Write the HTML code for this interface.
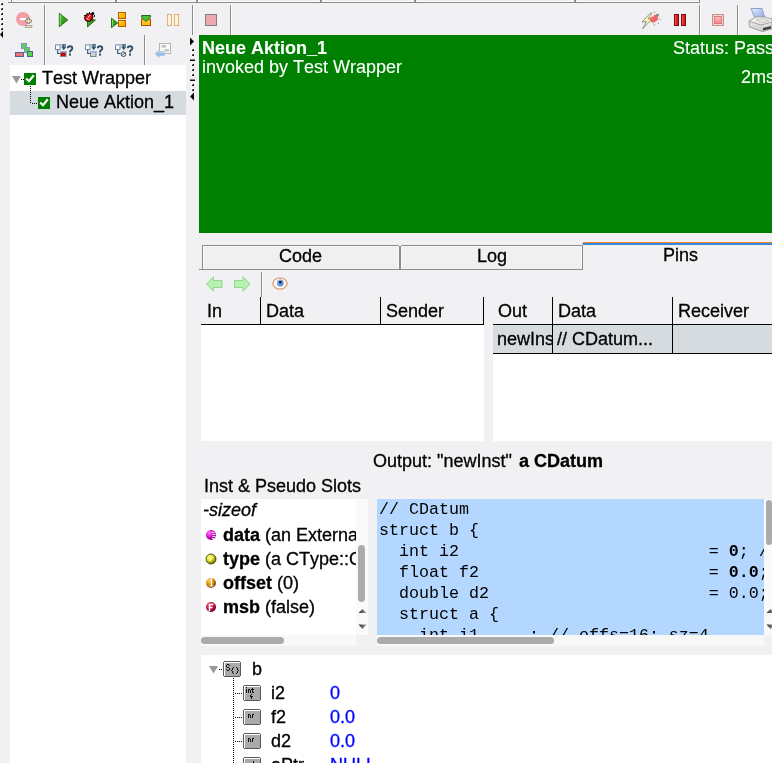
<!DOCTYPE html>
<html><head><meta charset="utf-8">
<style>
*{margin:0;padding:0;box-sizing:border-box}
html,body{width:772px;height:763px;overflow:hidden;background:#f1f1f3;font-family:"Liberation Sans",sans-serif;font-size:18px;color:#000;font-kerning:none}
.a{position:absolute}
.t{position:absolute;white-space:pre;line-height:20px;font-size:18px;will-change:transform;-webkit-text-stroke:0.3px currentColor}
.b{font-weight:bold}
.sep{position:absolute;width:1px;background:#8c8c8c;box-shadow:1px 0 0 #fff}
.g{position:absolute;background:#8c8c8c}
.k{position:absolute;background:#000}
svg{position:absolute;overflow:visible;will-change:transform}
.mono{position:absolute;white-space:pre;font-family:"Liberation Mono",monospace;font-size:16.67px;line-height:21px;will-change:transform}
.v{color:#0000ff}
</style></head><body>

<!-- ============ top area ============ -->
<div class="a" style="left:8px;top:0;width:692px;height:2px;background:#f0f0f0"></div>
<div class="a" style="left:9px;top:1px;width:690px;height:1px;background:#fafafa"></div>
<div class="g" style="left:8px;top:2px;width:692px;height:1px"></div>
<div class="g" style="left:11px;top:0;width:1px;height:2px"></div>
<div class="g" style="left:115px;top:0;width:2px;height:2px;box-shadow:-1px 0 0 #fafafa,1px 0 0 #fafafa"></div>
<div class="g" style="left:196px;top:0;width:2px;height:2px;box-shadow:-1px 0 0 #fafafa,1px 0 0 #fafafa"></div>
<div class="g" style="left:320px;top:0;width:2px;height:2px;box-shadow:-1px 0 0 #fafafa,1px 0 0 #fafafa"></div>
<div class="g" style="left:414px;top:0;width:2px;height:2px;box-shadow:-1px 0 0 #fafafa,1px 0 0 #fafafa"></div>
<div class="g" style="left:574px;top:0;width:2px;height:2px;box-shadow:-1px 0 0 #fafafa,1px 0 0 #fafafa"></div>
<div class="g" style="left:699px;top:0;width:1px;height:3px"></div>

<!-- left splitter dots -->
<svg style="left:0;top:0" width="6" height="40"><rect x="0" y="2" width="2" height="2" fill="#fff"/><rect x="1" y="3" width="2" height="2" fill="#222"/><rect x="1" y="3" width="1" height="1" fill="#888"/><rect x="0" y="7" width="2" height="2" fill="#fff"/><rect x="1" y="8" width="2" height="2" fill="#222"/><rect x="1" y="8" width="1" height="1" fill="#888"/><rect x="0" y="12" width="2" height="2" fill="#fff"/><rect x="1" y="13" width="2" height="2" fill="#222"/><rect x="1" y="13" width="1" height="1" fill="#888"/><rect x="0" y="17" width="2" height="2" fill="#fff"/><rect x="1" y="18" width="2" height="2" fill="#222"/><rect x="1" y="18" width="1" height="1" fill="#888"/><rect x="0" y="22" width="2" height="2" fill="#fff"/><rect x="1" y="23" width="2" height="2" fill="#222"/><rect x="1" y="23" width="1" height="1" fill="#888"/><rect x="0" y="27" width="2" height="2" fill="#fff"/><rect x="1" y="28" width="2" height="2" fill="#222"/><rect x="1" y="28" width="1" height="1" fill="#888"/><path d="M0 34.5 L3 31 L3 38 Z" fill="#000"/></svg>

<!-- toolbar separators (with highlight) -->
<div class="sep" style="left:44px;top:5px;height:60px"></div>
<div class="sep" style="left:144px;top:35px;height:30px"></div>
<div class="sep" style="left:192px;top:5px;height:30px"></div>
<div class="sep" style="left:230px;top:5px;height:30px"></div>
<div class="sep" style="left:699px;top:5px;height:30px"></div>
<div class="sep" style="left:737px;top:5px;height:30px"></div>

<!-- toolbar icons row 1 -->
<!-- red minus circle -->
<svg style="left:0;top:0" width="40" height="40">
 <circle cx="23" cy="19" r="7" fill="#f2a0a4"/>
 <rect x="20" y="18" width="6" height="2.2" fill="#fff"/>
 <path d="M28.5 17.8 v6 M25.3 21 h6.4" stroke="#6a7080" stroke-width="2.8"/>
 <path d="M28.5 18.5 v4.6 M26 21 h5" stroke="#fbe6a0" stroke-width="1.3"/>
 <rect x="25.3" y="25.6" width="6.6" height="1.9" fill="#fbe6a0" stroke="#7a8090" stroke-width="0.6"/>
</svg>
<!-- play -->
<svg style="left:0;top:0" width="130" height="34">
 <defs>
  <linearGradient id="gpl" x1="0" y1="0" x2="1" y2="1"><stop offset="0" stop-color="#70e050"/><stop offset="0.45" stop-color="#3aa028"/><stop offset="1" stop-color="#2a7018"/></linearGradient>
 </defs>
 <path d="M59.3 13.2 L67.8 20 L59.3 26.8 Z" fill="url(#gpl)" stroke="#2a6a18" stroke-width="0.9" stroke-linejoin="round"/>
 <path d="M60.3 15 V25" stroke="#80f060" stroke-width="0.9"/>
 <!-- bug -->
 <path d="M87.5 19 L95.5 20 L87.5 27 Z" fill="url(#gpl)" stroke="#2a6a18" stroke-width="0.9" stroke-linejoin="round"/>
 <path d="M90 22 l1 -2 M92 21.5 l1 -2" stroke="#1a4a10" stroke-width="0.8"/>
 <ellipse cx="88.8" cy="17.5" rx="4.3" ry="3.6" transform="rotate(-35 88.8 17.5)" fill="#e01010" stroke="#000" stroke-width="1"/>
 <circle cx="87.2" cy="18.8" r="0.7" fill="#fff"/><circle cx="88.5" cy="17" r="0.7" fill="#fff"/><circle cx="89.8" cy="15.8" r="0.7" fill="#fff"/><circle cx="88.8" cy="19.5" r="0.6" fill="#fff"/>
 <circle cx="92.8" cy="13.5" r="1.5" fill="#000"/>
 <path d="M84 15.5 h2 M86.5 13.5 l1.5 0.5 M94.5 15 v2 M89 12 l1 1" stroke="#000" stroke-width="0.9"/>
</svg>
<!-- play + yellow boxes -->
<svg style="left:0;top:0" width="130" height="34">
 <defs><linearGradient id="gyb" x1="0" y1="0" x2="1" y2="1"><stop offset="0" stop-color="#fff080"/><stop offset="0.4" stop-color="#ffc000"/><stop offset="1" stop-color="#f0a000"/></linearGradient></defs>
 <path d="M111.5 18.3 L117.6 23 L111.5 27.6 Z" fill="url(#gpl)" stroke="#1a5a10" stroke-width="0.9" stroke-linejoin="round"/>
 <path d="M112.5 20 V26" stroke="#70f040" stroke-width="0.9"/>
 <rect x="118.5" y="12.5" width="7" height="6" fill="url(#gyb)" stroke="#b85a00"/>
 <rect x="118.5" y="20.5" width="7" height="6" fill="url(#gyb)" stroke="#b85a00"/>
</svg>
<!-- envelope -->
<svg style="left:141px;top:15px" width="12" height="12">
 <rect x="0.5" y="4" width="9" height="6.5" fill="#ffc020" stroke="#a05000"/>
 <path d="M0.5 0.5 h9 v1.5 l-4.5 4.5 l-4.5 -4.5 Z" fill="#48c038" stroke="#207018" stroke-width="1"/>
</svg>
<!-- pause light -->
<svg style="left:167px;top:14px" width="14" height="14">
 <rect x="0.5" y="0.5" width="4" height="11" fill="#fff6d0" stroke="#e0b080"/>
 <rect x="7.5" y="0.5" width="4" height="11" fill="#fff6d0" stroke="#e0b080"/>
</svg>
<!-- pink stop -->
<svg style="left:205px;top:14px" width="13" height="13">
 <rect x="0.5" y="0.5" width="11" height="11" fill="#f0a8b0" stroke="#808080"/>
</svg>

<!-- right toolbar -->
<svg style="left:0;top:0" width="700" height="34">
 <defs><linearGradient id="rbar" x1="0" y1="0" x2="1" y2="0"><stop offset="0" stop-color="#f8a080"/><stop offset="0.35" stop-color="#e83020"/><stop offset="1" stop-color="#c01010"/></linearGradient></defs>
 <path d="M650.5 13 L642 22 L646.5 21.5 L642.5 29 L652.5 18.5 L648 19 L652 13 Z" fill="#fafab0" stroke="#8a8a80" stroke-width="0.9" stroke-linejoin="round"/>
 <ellipse cx="654" cy="18.8" rx="4.3" ry="3.4" transform="rotate(-35 654 18.8)" fill="#f06868"/>
 <path d="M651 17 Q652.5 15.5 654 15.8" stroke="#fff" stroke-width="1" fill="none"/>
 <circle cx="657.5" cy="15" r="1.5" fill="#888"/>
 <path d="M659 19 l1.5 1 M657.5 22.5 l1.5 1.5 M654 23.5 l0.5 1.8 M655 13 l-1 -1.2" stroke="#888" stroke-width="0.9"/>
 <rect x="674.5" y="14.5" width="4" height="11" fill="url(#rbar)" stroke="#800818"/>
 <rect x="681.5" y="14.5" width="4" height="11" fill="url(#rbar)" stroke="#800818"/>
</svg>

<svg style="left:712px;top:14px" width="13" height="13">
 <defs><linearGradient id="pk" x1="0" y1="0" x2="0" y2="1"><stop offset="0" stop-color="#ffc0c0"/><stop offset="1" stop-color="#ff8080"/></linearGradient></defs>
 <rect x="0.5" y="0.5" width="11" height="11" fill="#e2ded6" stroke="#d08888"/>
 <rect x="2.5" y="2.5" width="7" height="7" fill="url(#pk)" stroke="#d08080"/>
</svg>
<svg style="left:0;top:0" width="772" height="34">
 <defs>
  <linearGradient id="pap" x1="0" y1="0" x2="1" y2="1"><stop offset="0" stop-color="#e4ecfa"/><stop offset="1" stop-color="#8aa8e0"/></linearGradient>
  <linearGradient id="pbody" x1="0" y1="0" x2="0" y2="1"><stop offset="0" stop-color="#f8f8f8"/><stop offset="1" stop-color="#c8c8c8"/></linearGradient>
 </defs>
 <path d="M751 8.5 L762 8.5 L764.5 17 L755 18.5 Z" fill="url(#pap)" stroke="#7f9ad0" stroke-width="0.9"/>
 <path d="M749 21 L756 17 L765 17 L772 19 L772 29 L762 31.5 L749.5 27 Z" fill="url(#pbody)" stroke="#9a9a90" stroke-width="0.9"/>
 <path d="M749.5 21.5 L761 25 L772 22" stroke="#a0a098" stroke-width="0.9" fill="none"/>
 <path d="M756 19.5 L763 18.5 L769 20.5 L762 22.5 Z" fill="#e8e8e8" stroke="#b0b0a8" stroke-width="0.6"/>
 <path d="M763 28 L771 26 L771 28.5 L763 30.5 Z" fill="#404040"/>
</svg>

<!-- toolbar icons row 2 -->
<svg style="left:15px;top:43px" width="19" height="15">
 <rect x="6.5" y="0.5" width="5" height="5" fill="#50d850" stroke="#8890c0"/>
 <rect x="9.5" y="4.5" width="5" height="5" fill="#50d850" stroke="#8890c0"/>
 <rect x="12.5" y="8.5" width="5" height="5" fill="#50d850" stroke="#506090"/>
 <rect x="0.5" y="9.5" width="8" height="4" fill="#f07080" stroke="#506090"/>
</svg>
<!-- ? icons -->
<svg style="left:0;top:0" width="140" height="60"><g transform="translate(0,0)"><rect x="55.5" y="44.5" width="4.5" height="5" fill="#fff" stroke="#6a8ca0"/><rect x="55" y="44" width="5.5" height="1.6" fill="#98b0dc"/><path d="M57.7 50 V53.5 H60.5" stroke="#2e5068" stroke-width="1.1" fill="none"/><path d="M61.5 44.8 H66 M63.75 45 V49.5 M61.8 46.3 L63.75 49.2 L65.7 46.3" stroke="#2e5068" stroke-width="1.2" fill="none"/><rect x="60.5" y="51.5" width="5.5" height="5" fill="#d00000" stroke="#6a8ca0"/><rect x="60" y="51" width="6.5" height="1.6" fill="#98b0dc"/><path d="M67.8 48.3 Q67.8 46.2 70 46.2 Q72.3 46.2 72.3 48.3 Q72.3 49.6 70.8 50.4 Q70 50.9 70 52.5" stroke="#2e5068" stroke-width="1.9" fill="none"/><rect x="69" y="53.6" width="2" height="2" fill="#2e5068"/></g><g transform="translate(30,0)"><rect x="55.5" y="44.5" width="4.5" height="5" fill="#fff" stroke="#6a8ca0"/><rect x="55" y="44" width="5.5" height="1.6" fill="#98b0dc"/><path d="M57.7 50 V53.5 H60.5" stroke="#2e5068" stroke-width="1.1" fill="none"/><path d="M61.5 44.8 H66 M63.75 45 V49.5 M61.8 46.3 L63.75 49.2 L65.7 46.3" stroke="#2e5068" stroke-width="1.2" fill="none"/><rect x="60.5" y="51.5" width="5.5" height="5" fill="#d0d0d0" stroke="#6a8ca0"/><rect x="60" y="51" width="6.5" height="1.6" fill="#98b0dc"/><path d="M67.8 48.3 Q67.8 46.2 70 46.2 Q72.3 46.2 72.3 48.3 Q72.3 49.6 70.8 50.4 Q70 50.9 70 52.5" stroke="#2e5068" stroke-width="1.9" fill="none"/><rect x="69" y="53.6" width="2" height="2" fill="#2e5068"/></g><g transform="translate(60,0)"><rect x="55.5" y="44.5" width="4.5" height="5" fill="#fff" stroke="#6a8ca0"/><rect x="55" y="44" width="5.5" height="1.6" fill="#98b0dc"/><path d="M57.7 50 V53.5 H60.5" stroke="#2e5068" stroke-width="1.1" fill="none"/><path d="M61.5 44.8 H66 M63.75 45 V49.5 M61.8 46.3 L63.75 49.2 L65.7 46.3" stroke="#2e5068" stroke-width="1.2" fill="none"/><circle cx="63.5" cy="54.2" r="2.3" fill="none" stroke="#2e5068" stroke-width="1"/><path d="M62.2 55.5 L64.8 52.9" stroke="#2e5068" stroke-width="1"/><path d="M67.8 48.3 Q67.8 46.2 70 46.2 Q72.3 46.2 72.3 48.3 Q72.3 49.6 70.8 50.4 Q70 50.9 70 52.5" stroke="#2e5068" stroke-width="1.9" fill="none"/><rect x="69" y="53.6" width="2" height="2" fill="#2e5068"/></g></svg>
<!-- arrow window -->
<svg style="left:0;top:0" width="180" height="60">
 <rect x="159.5" y="43.5" width="11" height="10" fill="#fafafa" stroke="#b4b4a4"/>
 <rect x="161.5" y="45" width="4.5" height="2.6" fill="#c4c4c4"/>
 <rect x="164.5" y="49" width="4.5" height="2.6" fill="#c4c4c4"/>
 <defs><linearGradient id="abl" x1="0" y1="0" x2="0" y2="1"><stop offset="0" stop-color="#c8dcf8"/><stop offset="1" stop-color="#80a8e0"/></linearGradient></defs>
 <path d="M154.8 53.5 L159.3 49.3 L159.3 51.3 L164.8 51.3 L164.8 55.7 L159.3 55.7 L159.3 57.7 Z" fill="url(#abl)"/>
</svg>

<!-- ============ left tree panel ============ -->
<div class="a" style="left:10px;top:65px;width:176px;height:698px;background:#fff"></div>
<div class="a" style="left:10px;top:91px;width:176px;height:24px;background:#d6dbe0"></div>
<svg style="left:10px;top:70px" width="50" height="45">
 <path d="M2 6 L11 6 L6.5 13.5 Z" fill="#999"/>
 <g fill="#000"><rect x="11" y="9" width="1" height="1"/><rect x="13" y="9" width="1" height="1"/>
 <rect x="20" y="16" width="1" height="1"/><rect x="20" y="18" width="1" height="1"/><rect x="20" y="20" width="1" height="1"/><rect x="20" y="22" width="1" height="1"/><rect x="20" y="24" width="1" height="1"/><rect x="20" y="26" width="1" height="1"/><rect x="20" y="28" width="1" height="1"/><rect x="20" y="30" width="1" height="1"/><rect x="20" y="32" width="1" height="1"/>
 <rect x="22" y="33" width="1" height="1"/><rect x="24" y="33" width="1" height="1"/><rect x="26" y="33" width="1" height="1"/></g>
 <rect x="14" y="3" width="12" height="12" fill="#008000"/>
 <path d="M16.2 8.5 L19 11.2 L23.8 5.2" stroke="#fff" stroke-width="2.2" fill="none"/>
 <rect x="28" y="27" width="12" height="12" fill="#008000"/>
 <path d="M30.2 32.5 L33 35.2 L37.8 29.2" stroke="#fff" stroke-width="2.2" fill="none"/>
</svg>
<div class="t" style="left:42px;top:68px">Test Wrapper</div>
<div class="t" style="left:56px;top:92px">Neue Aktion_1</div>

<!-- middle splitter -->
<svg style="left:189px;top:36px" width="8" height="66"><path d="M1 1.5 L5 5.5 L1 9.5 Z" fill="#000"/><rect x="2" y="12" width="2" height="2" fill="#fff"/><rect x="3" y="13" width="2" height="2" fill="#222"/><rect x="3" y="13" width="1" height="1" fill="#888"/><rect x="2" y="17" width="2" height="2" fill="#fff"/><rect x="3" y="18" width="2" height="2" fill="#222"/><rect x="3" y="18" width="1" height="1" fill="#888"/><rect x="2" y="27" width="2" height="2" fill="#fff"/><rect x="3" y="28" width="2" height="2" fill="#222"/><rect x="3" y="28" width="1" height="1" fill="#888"/><rect x="2" y="32" width="2" height="2" fill="#fff"/><rect x="3" y="33" width="2" height="2" fill="#222"/><rect x="3" y="33" width="1" height="1" fill="#888"/><rect x="2" y="37" width="2" height="2" fill="#fff"/><rect x="3" y="38" width="2" height="2" fill="#222"/><rect x="3" y="38" width="1" height="1" fill="#888"/><rect x="2" y="47" width="2" height="2" fill="#fff"/><rect x="3" y="48" width="2" height="2" fill="#222"/><rect x="3" y="48" width="1" height="1" fill="#888"/><rect x="2" y="52" width="2" height="2" fill="#fff"/><rect x="3" y="53" width="2" height="2" fill="#222"/><rect x="3" y="53" width="1" height="1" fill="#888"/><rect x="1" y="23.5" width="5" height="1.5" fill="#111"/><rect x="1" y="43.5" width="5" height="1.5" fill="#111"/><path d="M5 56.5 L1 60.5 L5 64.5 Z" fill="#000"/></svg>

<!-- ============ green panel ============ -->
<div class="a" style="left:199px;top:35px;width:573px;height:198px;background:#008000"></div>
<div class="t b" style="left:202px;top:38px;color:#fff;-webkit-text-stroke:0.1px #fff">Neue Aktion_1</div>
<div class="t" style="left:202px;top:57px;color:#fff;-webkit-text-stroke:0.1px #fff">invoked by Test Wrapper</div>
<div class="t" style="left:673px;top:38px;color:#fff;-webkit-text-stroke:0.1px #fff">Status: Pass</div>
<div class="t" style="left:741px;top:67px;color:#fff;-webkit-text-stroke:0.1px #fff">2ms</div>

<!-- ============ tabs ============ -->
<div class="g" style="left:199px;top:269px;width:573px;height:1px"></div>
<div class="a" style="left:202px;top:245px;width:198px;height:24px;border:1px solid #8c8c8c;border-bottom:none;border-radius:1px 1px 0 0;background:#f0f0f0;box-shadow:inset 1px 1px 0 #f9f9f9,inset -1px 0 0 #f9f9f9"></div>
<div class="a" style="left:400px;top:245px;width:183px;height:24px;border:1px solid #8c8c8c;border-bottom:none;border-radius:1px 1px 0 0;background:#f0f0f0;box-shadow:inset 1px 1px 0 #f9f9f9,inset -1px 0 0 #f9f9f9"></div>
<div class="a" style="left:399px;top:245px;width:2px;height:1px;background:#fafafa"></div>
<div class="a" style="left:583px;top:242px;width:189px;height:28px;background:#f1f1f3"></div>
<div class="a" style="left:583px;top:242px;width:189px;height:1px;background:#f08a24"></div>
<div class="a" style="left:582px;top:243px;width:1px;height:1px;background:#f08a24"></div>
<div class="a" style="left:583px;top:243px;width:189px;height:2px;background:#3a86dc"></div>
<div class="t" style="left:279px;top:246px">Code</div>
<div class="t" style="left:477px;top:246px">Log</div>
<div class="t" style="left:663px;top:245px">Pins</div>

<!-- ============ pins toolbar ============ -->
<div class="sep" style="left:261px;top:272px;height:25px"></div>
<svg style="left:206px;top:276px" width="17" height="16">
 <path d="M0.5 8 L7.5 0.8 L7.5 4.5 L16 4.5 L16 11.5 L7.5 11.5 L7.5 15.2 Z" fill="#b8f0b0" stroke="#8ad888" stroke-width="1"/>
</svg>
<svg style="left:234px;top:276px" width="17" height="16">
 <path d="M16 8 L9 0.8 L9 4.5 L0.5 4.5 L0.5 11.5 L9 11.5 L9 15.2 Z" fill="#b8f0b0" stroke="#8ad888" stroke-width="1"/>
</svg>
<svg style="left:272px;top:277px" width="17" height="13">
 <defs><radialGradient id="iris" cx="0.4" cy="0.4" r="0.6"><stop offset="0" stop-color="#a8c8f8"/><stop offset="1" stop-color="#4a78d0"/></radialGradient></defs>
 <path d="M0.8 6.5 C2.5 -0.8 13.5 -0.8 15.2 6.5 C13.5 13.8 2.5 13.8 0.8 6.5 Z" fill="#fff" stroke="#e0a880" stroke-width="1.4"/>
 <circle cx="8.2" cy="6" r="3.4" fill="url(#iris)"/>
 <circle cx="8.2" cy="5.3" r="1.2" fill="#000"/>
</svg>

<!-- ============ In table ============ -->
<div class="a" style="left:201px;top:325px;width:283px;height:116px;background:#fff"></div>
<div class="k" style="left:201px;top:324px;width:283px;height:1px"></div>
<div class="k" style="left:260px;top:297px;width:1px;height:28px"></div>
<div class="k" style="left:380px;top:297px;width:1px;height:28px"></div>
<div class="k" style="left:483px;top:297px;width:1px;height:28px"></div>
<div class="t" style="left:207px;top:301px">In</div>
<div class="t" style="left:266px;top:301px">Data</div>
<div class="t" style="left:386px;top:301px">Sender</div>

<!-- ============ Out table ============ -->
<div class="a" style="left:493px;top:325px;width:279px;height:116px;background:#fff"></div>
<div class="a" style="left:493px;top:325px;width:279px;height:28px;background:#d6dbe0"></div>
<div class="k" style="left:493px;top:324px;width:279px;height:1px"></div>
<div class="k" style="left:493px;top:353px;width:279px;height:1px"></div>
<div class="k" style="left:552px;top:297px;width:1px;height:57px"></div>
<div class="k" style="left:672px;top:297px;width:1px;height:57px"></div>
<div class="t" style="left:498px;top:301px">Out</div>
<div class="t" style="left:558px;top:301px">Data</div>
<div class="t" style="left:678px;top:301px">Receiver</div>
<div class="a" style="left:493px;top:325px;width:59px;height:28px;overflow:hidden"><div class="t" style="left:4px;top:4px">newInst</div></div>
<div class="t" style="left:557px;top:329px">// CDatum...</div>

<!-- ============ output ============ -->
<div class="t" style="left:373px;top:451px">Output: "newInst"</div>
<div class="t b" style="left:519px;top:451px">a CDatum</div>
<div class="t" style="left:204px;top:476px">Inst &amp; Pseudo Slots</div>

<!-- slot list -->
<div class="a" style="left:201px;top:499px;width:155px;height:136px;background:#fff"></div>
<div class="a" style="left:356px;top:499px;width:12px;height:136px;background:#fafafa"></div>
<div class="a" style="left:201px;top:635px;width:155px;height:11px;background:#f8f8f8"></div>
<div class="a" style="left:201px;top:499px;width:155px;height:136px;overflow:hidden">
 <div class="t" style="left:2px;top:1px;font-style:italic">-sizeof</div>
 <div class="t" style="left:22px;top:26px"><b>data</b> (an ExternalBytes)</div>
 <div class="t" style="left:22px;top:50px"><b>type</b> (a CType::CStruct)</div>
 <div class="t" style="left:22px;top:74px"><b>offset</b> (0)</div>
 <div class="t" style="left:22px;top:98px"><b>msb</b> (false)</div>
</div>
<svg style="left:206px;top:530px" width="11" height="84">
 <defs>
  <radialGradient id="gm" cx="0.35" cy="0.3" r="0.75"><stop offset="0" stop-color="#ff80ff"/><stop offset="0.5" stop-color="#e010d0"/><stop offset="1" stop-color="#700060"/></radialGradient>
  <radialGradient id="gy" cx="0.35" cy="0.3" r="0.75"><stop offset="0" stop-color="#ffffa0"/><stop offset="0.5" stop-color="#e0e020"/><stop offset="1" stop-color="#606000"/></radialGradient>
  <radialGradient id="go" cx="0.35" cy="0.3" r="0.75"><stop offset="0" stop-color="#ffd060"/><stop offset="0.5" stop-color="#d89010"/><stop offset="1" stop-color="#704000"/></radialGradient>
  <radialGradient id="gr" cx="0.35" cy="0.3" r="0.75"><stop offset="0" stop-color="#ff6080"/><stop offset="0.5" stop-color="#d01040"/><stop offset="1" stop-color="#600018"/></radialGradient>
 </defs>
 <circle cx="5" cy="5" r="5" fill="url(#gm)"/>
 <path d="M6 2.5 h2.5 M6.5 4.5 h3 M6.5 6.5 h3 M6 8.5 h2.5" stroke="#fff" stroke-width="0.9"/>
 <circle cx="5" cy="29" r="5" fill="url(#gy)" stroke="#303000" stroke-width="0.8"/>
 <path d="M3 31 l4 -4" stroke="#fff" stroke-width="0.9"/>
 <circle cx="5" cy="53" r="5" fill="url(#go)"/>
 <path d="M4 50 l1.5 -1 v7 M3.5 56 h4" stroke="#fff" stroke-width="1.2" fill="none"/>
 <circle cx="5" cy="77" r="5" fill="url(#gr)"/>
 <path d="M3.5 81 v-6.5 h4 M3.5 77.5 h3" stroke="#fff" stroke-width="1.5" fill="none"/>
</svg>
<!-- slot vscroll -->
<div class="a" style="left:358px;top:545px;width:7px;height:57px;background:#ababab;border-radius:4px"></div>
<svg style="left:358px;top:608px" width="10" height="24">
 <defs><linearGradient id="ar" x1="0" y1="0" x2="1" y2="0"><stop offset="0" stop-color="#222"/><stop offset="1" stop-color="#aaa"/></linearGradient></defs>
 <path d="M0.5 5 L4.5 1 L8.5 5 Z" fill="url(#ar)"/>
 <path d="M0.5 16.5 L4.5 21 L8.5 16.5 Z" fill="url(#ar)"/>
</svg>
<!-- slot hscroll -->
<div class="a" style="left:201px;top:637px;width:83px;height:7px;background:#ababab;border-radius:4px"></div>

<!-- ============ code ============ -->
<div class="a" style="left:377px;top:499px;width:387px;height:136px;background:#b3d7ff;overflow:hidden">
 <div class="mono" style="left:2px;top:0px">// CDatum
struct b {
  int i2                         = <b>0</b>; // offs=0; sz=4
  float f2                       = <b>0.0</b>; // offs=4; sz=4
  double d2                      = 0.0; // offs=8; sz=8
  struct a {
    int i1     : // offs=16; sz=4
    float f1   : // offs=20; sz=4</div>
</div>
<div class="a" style="left:377px;top:635px;width:387px;height:11px;background:#f8f8f8"></div>
<div class="a" style="left:377px;top:637px;width:177px;height:7px;background:#ababab;border-radius:4px"></div>
<div class="a" style="left:764px;top:499px;width:8px;height:136px;background:#fafafa"></div>
<div class="a" style="left:766px;top:500px;width:6px;height:45px;background:#ababab;border-radius:3px"></div>
<svg style="left:766px;top:608px" width="8" height="24">
 <path d="M0.5 5 L4.5 1 L8.5 5 Z" fill="url(#ar)"/>
 <path d="M0.5 16.5 L4.5 21 L8.5 16.5 Z" fill="url(#ar)"/>
</svg>

<!-- ============ bottom tree ============ -->
<div class="a" style="left:201px;top:655px;width:571px;height:108px;background:#fff"></div>
<svg style="left:0;top:0" width="300" height="763"><path d="M209 666 L218 666 L213.5 673.5 Z" fill="#999"/><rect x="219" y="669" width="1" height="1" fill="#000"/><rect x="221" y="669" width="1" height="1" fill="#000"/><rect x="233" y="678" width="1" height="1" fill="#000"/><rect x="233" y="680" width="1" height="1" fill="#000"/><rect x="233" y="682" width="1" height="1" fill="#000"/><rect x="233" y="684" width="1" height="1" fill="#000"/><rect x="233" y="686" width="1" height="1" fill="#000"/><rect x="233" y="688" width="1" height="1" fill="#000"/><rect x="233" y="690" width="1" height="1" fill="#000"/><rect x="233" y="692" width="1" height="1" fill="#000"/><rect x="233" y="694" width="1" height="1" fill="#000"/><rect x="233" y="696" width="1" height="1" fill="#000"/><rect x="233" y="698" width="1" height="1" fill="#000"/><rect x="233" y="700" width="1" height="1" fill="#000"/><rect x="233" y="702" width="1" height="1" fill="#000"/><rect x="233" y="704" width="1" height="1" fill="#000"/><rect x="233" y="706" width="1" height="1" fill="#000"/><rect x="233" y="708" width="1" height="1" fill="#000"/><rect x="233" y="710" width="1" height="1" fill="#000"/><rect x="233" y="712" width="1" height="1" fill="#000"/><rect x="233" y="714" width="1" height="1" fill="#000"/><rect x="233" y="716" width="1" height="1" fill="#000"/><rect x="233" y="718" width="1" height="1" fill="#000"/><rect x="233" y="720" width="1" height="1" fill="#000"/><rect x="233" y="722" width="1" height="1" fill="#000"/><rect x="233" y="724" width="1" height="1" fill="#000"/><rect x="233" y="726" width="1" height="1" fill="#000"/><rect x="233" y="728" width="1" height="1" fill="#000"/><rect x="233" y="730" width="1" height="1" fill="#000"/><rect x="233" y="732" width="1" height="1" fill="#000"/><rect x="233" y="734" width="1" height="1" fill="#000"/><rect x="233" y="736" width="1" height="1" fill="#000"/><rect x="233" y="738" width="1" height="1" fill="#000"/><rect x="233" y="740" width="1" height="1" fill="#000"/><rect x="233" y="742" width="1" height="1" fill="#000"/><rect x="233" y="744" width="1" height="1" fill="#000"/><rect x="233" y="746" width="1" height="1" fill="#000"/><rect x="233" y="748" width="1" height="1" fill="#000"/><rect x="233" y="750" width="1" height="1" fill="#000"/><rect x="233" y="752" width="1" height="1" fill="#000"/><rect x="233" y="754" width="1" height="1" fill="#000"/><rect x="233" y="756" width="1" height="1" fill="#000"/><rect x="233" y="758" width="1" height="1" fill="#000"/><rect x="233" y="760" width="1" height="1" fill="#000"/><rect x="233" y="762" width="1" height="1" fill="#000"/><rect x="235" y="693" width="1" height="1" fill="#000"/><rect x="237" y="693" width="1" height="1" fill="#000"/><rect x="239" y="693" width="1" height="1" fill="#000"/><rect x="241" y="693" width="1" height="1" fill="#000"/><rect x="235" y="717" width="1" height="1" fill="#000"/><rect x="237" y="717" width="1" height="1" fill="#000"/><rect x="239" y="717" width="1" height="1" fill="#000"/><rect x="241" y="717" width="1" height="1" fill="#000"/><rect x="235" y="741" width="1" height="1" fill="#000"/><rect x="237" y="741" width="1" height="1" fill="#000"/><rect x="239" y="741" width="1" height="1" fill="#000"/><rect x="241" y="741" width="1" height="1" fill="#000"/><rect x="224" y="661" width="16" height="1" fill="#5a5a5a"/><rect x="224" y="676" width="16" height="1" fill="#5a5a5a"/><rect x="223" y="662" width="1" height="14" fill="#5a5a5a"/><rect x="240" y="662" width="1" height="14" fill="#5a5a5a"/><rect x="224" y="662" width="16" height="14" fill="#fff"/><rect x="225" y="663" width="15" height="13" fill="#aaa"/><rect x="227" y="664" width="1" height="1" fill="#111"/><rect x="228" y="664" width="1" height="1" fill="#111"/><rect x="226" y="665" width="1" height="1" fill="#111"/><rect x="229" y="665" width="1" height="1" fill="#111"/><rect x="226" y="666" width="1" height="1" fill="#111"/><rect x="227" y="667" width="1" height="1" fill="#111"/><rect x="228" y="667" width="1" height="1" fill="#111"/><rect x="229" y="668" width="1" height="1" fill="#111"/><rect x="226" y="669" width="1" height="1" fill="#111"/><rect x="229" y="669" width="1" height="1" fill="#111"/><rect x="227" y="670" width="1" height="1" fill="#111"/><rect x="228" y="670" width="1" height="1" fill="#111"/><rect x="233" y="667" width="1" height="1" fill="#111"/><rect x="232" y="668" width="1" height="1" fill="#111"/><rect x="232" y="669" width="1" height="1" fill="#111"/><rect x="231" y="670" width="1" height="1" fill="#111"/><rect x="232" y="671" width="1" height="1" fill="#111"/><rect x="232" y="672" width="1" height="1" fill="#111"/><rect x="233" y="673" width="1" height="1" fill="#111"/><rect x="236" y="667" width="1" height="1" fill="#111"/><rect x="237" y="668" width="1" height="1" fill="#111"/><rect x="237" y="669" width="1" height="1" fill="#111"/><rect x="238" y="670" width="1" height="1" fill="#111"/><rect x="237" y="671" width="1" height="1" fill="#111"/><rect x="237" y="672" width="1" height="1" fill="#111"/><rect x="236" y="673" width="1" height="1" fill="#111"/><rect x="244" y="685" width="16" height="1" fill="#5a5a5a"/><rect x="244" y="700" width="16" height="1" fill="#5a5a5a"/><rect x="243" y="686" width="1" height="14" fill="#5a5a5a"/><rect x="260" y="686" width="1" height="14" fill="#5a5a5a"/><rect x="244" y="686" width="16" height="14" fill="#fff"/><rect x="245" y="687" width="15" height="13" fill="#aaa"/><rect x="246" y="687" width="1" height="1" fill="#111"/><rect x="246" y="689" width="1" height="1" fill="#111"/><rect x="246" y="690" width="1" height="1" fill="#111"/><rect x="246" y="691" width="1" height="1" fill="#111"/><rect x="246" y="692" width="1" height="1" fill="#111"/><rect x="248" y="689" width="1" height="1" fill="#111"/><rect x="248" y="690" width="1" height="1" fill="#111"/><rect x="248" y="691" width="1" height="1" fill="#111"/><rect x="248" y="692" width="1" height="1" fill="#111"/><rect x="249" y="689" width="1" height="1" fill="#111"/><rect x="250" y="690" width="1" height="1" fill="#111"/><rect x="250" y="691" width="1" height="1" fill="#111"/><rect x="250" y="692" width="1" height="1" fill="#111"/><rect x="252" y="688" width="1" height="1" fill="#111"/><rect x="252" y="689" width="1" height="1" fill="#111"/><rect x="252" y="690" width="1" height="1" fill="#111"/><rect x="252" y="691" width="1" height="1" fill="#111"/><rect x="252" y="692" width="1" height="1" fill="#111"/><rect x="251" y="689" width="1" height="1" fill="#111"/><rect x="253" y="689" width="1" height="1" fill="#111"/><rect x="253" y="692" width="1" height="1" fill="#111"/><rect x="251" y="694" width="1" height="1" fill="#111"/><rect x="250" y="695" width="1" height="1" fill="#111"/><rect x="250" y="696" width="1" height="1" fill="#111"/><rect x="251" y="696" width="1" height="1" fill="#111"/><rect x="252" y="696" width="1" height="1" fill="#111"/><rect x="251" y="697" width="1" height="1" fill="#111"/><rect x="251" y="698" width="1" height="1" fill="#111"/><rect x="244" y="709" width="16" height="1" fill="#5a5a5a"/><rect x="244" y="724" width="16" height="1" fill="#5a5a5a"/><rect x="243" y="710" width="1" height="14" fill="#5a5a5a"/><rect x="260" y="710" width="1" height="14" fill="#5a5a5a"/><rect x="244" y="710" width="16" height="14" fill="#fff"/><rect x="245" y="711" width="15" height="13" fill="#aaa"/><rect x="248" y="714" width="1" height="1" fill="#111"/><rect x="248" y="715" width="1" height="1" fill="#111"/><rect x="248" y="716" width="1" height="1" fill="#111"/><rect x="248" y="717" width="1" height="1" fill="#111"/><rect x="249" y="714" width="1" height="1" fill="#111"/><rect x="250" y="715" width="1" height="1" fill="#111"/><rect x="250" y="716" width="1" height="1" fill="#111"/><rect x="250" y="717" width="1" height="1" fill="#111"/><rect x="252" y="714" width="1" height="1" fill="#111"/><rect x="252" y="715" width="1" height="1" fill="#111"/><rect x="252" y="716" width="1" height="1" fill="#111"/><rect x="252" y="717" width="1" height="1" fill="#111"/><rect x="253" y="714" width="1" height="1" fill="#111"/><rect x="244" y="733" width="16" height="1" fill="#5a5a5a"/><rect x="244" y="748" width="16" height="1" fill="#5a5a5a"/><rect x="243" y="734" width="1" height="14" fill="#5a5a5a"/><rect x="260" y="734" width="1" height="14" fill="#5a5a5a"/><rect x="244" y="734" width="16" height="14" fill="#fff"/><rect x="245" y="735" width="15" height="13" fill="#aaa"/><rect x="248" y="738" width="1" height="1" fill="#111"/><rect x="248" y="739" width="1" height="1" fill="#111"/><rect x="248" y="740" width="1" height="1" fill="#111"/><rect x="248" y="741" width="1" height="1" fill="#111"/><rect x="249" y="738" width="1" height="1" fill="#111"/><rect x="250" y="739" width="1" height="1" fill="#111"/><rect x="250" y="740" width="1" height="1" fill="#111"/><rect x="250" y="741" width="1" height="1" fill="#111"/><rect x="252" y="738" width="1" height="1" fill="#111"/><rect x="252" y="739" width="1" height="1" fill="#111"/><rect x="252" y="740" width="1" height="1" fill="#111"/><rect x="252" y="741" width="1" height="1" fill="#111"/><rect x="253" y="738" width="1" height="1" fill="#111"/><rect x="244" y="757" width="16" height="1" fill="#5a5a5a"/><rect x="244" y="772" width="16" height="1" fill="#5a5a5a"/><rect x="243" y="758" width="1" height="14" fill="#5a5a5a"/><rect x="260" y="758" width="1" height="14" fill="#5a5a5a"/><rect x="244" y="758" width="16" height="14" fill="#fff"/><rect x="245" y="759" width="15" height="13" fill="#aaa"/><rect x="253" y="761" width="1" height="2" fill="#111"/></svg>
<div class="t" style="left:252px;top:659px">b</div>
<div class="t" style="left:271px;top:683px">i2</div>
<div class="t" style="left:271px;top:707px">f2</div>
<div class="t" style="left:271px;top:731px">d2</div>
<div class="t" style="left:271px;top:755px">aPtr</div>
<div class="t v" style="left:330px;top:683px">0</div>
<div class="t v" style="left:330px;top:707px">0.0</div>
<div class="t v" style="left:330px;top:731px">0.0</div>
<div class="t v" style="left:330px;top:755px">NULL</div>

</body></html>
